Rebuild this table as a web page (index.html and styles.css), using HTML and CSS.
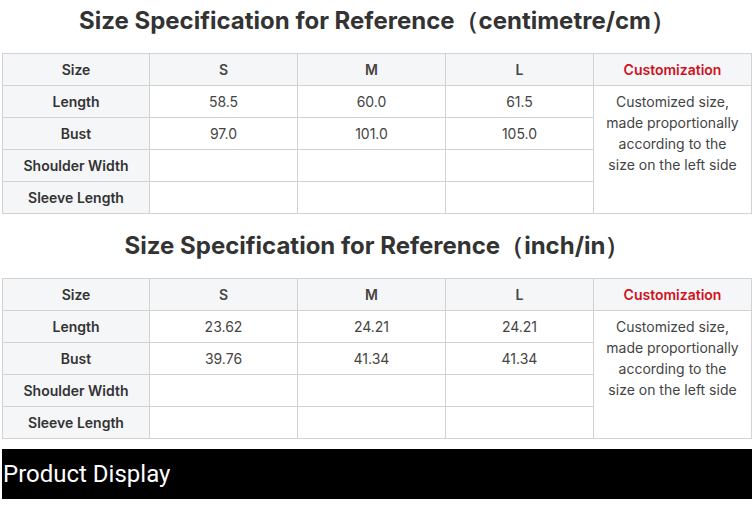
FILE: index.html
```html
<!DOCTYPE html>
<html>
<head>
<meta charset="utf-8">
<link rel="stylesheet" href="styles.css">
</head>
<body>
<div class="page">
  <h2 class="title">Size Specification for Reference（centimetre/cm）</h2>
  <table class="spec">
    <colgroup><col class="c1"><col class="c2"><col class="c2"><col class="c2"><col></colgroup>
    <tr class="head"><th>Size</th><td>S</td><td>M</td><td>L</td><td class="custom">Customization</td></tr>
    <tr><th>Length</th><td>58.5</td><td>60.0</td><td>61.5</td><td class="note" rowspan="4">Customized size, made proportionally according to the size on the left side</td></tr>
    <tr><th>Bust</th><td>97.0</td><td>101.0</td><td>105.0</td></tr>
    <tr><th>Shoulder Width</th><td></td><td></td><td></td></tr>
    <tr><th>Sleeve Length</th><td></td><td></td><td></td></tr>
  </table>
  <h2 class="title second">Size Specification for Reference（inch/in）</h2>
  <table class="spec">
    <colgroup><col class="c1"><col class="c2"><col class="c2"><col class="c2"><col></colgroup>
    <tr class="head"><th>Size</th><td>S</td><td>M</td><td>L</td><td class="custom">Customization</td></tr>
    <tr><th>Length</th><td>23.62</td><td>24.21</td><td>24.21</td><td class="note" rowspan="4">Customized size, made proportionally according to the size on the left side</td></tr>
    <tr><th>Bust</th><td>39.76</td><td>41.34</td><td>41.34</td></tr>
    <tr><th>Shoulder Width</th><td></td><td></td><td></td></tr>
    <tr><th>Sleeve Length</th><td></td><td></td><td></td></tr>
  </table>
  <div class="bar">Product Display</div>
</div>
</body>
</html>
```
FILE: styles.css
```css
html, body { margin: 0; padding: 0; background: #fff; }
.page { padding: 0 2px; font-family: Inter, "Noto Sans", sans-serif; color: #333; }
.title { margin: 0 0 12px; padding-top: 1px; font-size: 24px; line-height: 40px; font-weight: 700; text-align: center; color: #333; }
.title.second { margin-top: 11px; }
.spec { width: 750px; border-collapse: collapse; table-layout: fixed; font-size: 14px; }
.spec col.c1 { width: 147px; }
.spec col.c2 { width: 148px; }
.spec th, .spec td { border: 1px solid #d2d2d2; height: 31px; padding: 0 4px; text-align: center; vertical-align: middle; line-height: 20px; }
.spec th { background: #f5f6f8; font-weight: 600; }
.spec tr.head td { background: #f5f6f8; font-weight: 600; }
.spec td { font-weight: 400; color: #444; }
.spec tr.head td.custom { color: #d0111b; }
.spec td.note { vertical-align: top; padding: 5px 10px 0; line-height: 21px; background: #fff; }
.bar { margin-top: 10px; height: 50px; background: #000; color: #fff; font-family: Roboto, sans-serif; font-size: 24px; line-height: 50px; padding-left: 1px; }
```
